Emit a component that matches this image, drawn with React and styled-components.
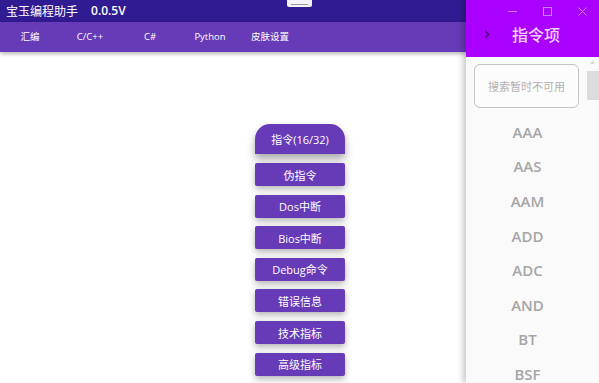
import React from "react";
import styled, { createGlobalStyle } from "styled-components";

const Global = createGlobalStyle`
  html, body { margin: 0; padding: 0; background: #ffffff; }
  body { width: 599px; height: 383px; overflow: hidden; font-family: "Open Sans", "Noto Sans CJK SC", sans-serif; }
  * { box-sizing: border-box; }
`;

const Window = styled.div`
  position: relative;
  width: 599px;
  height: 383px;
  overflow: hidden;
  display: flex;
  flex-direction: column;
  background: #ffffff;
`;

const TitleBar = styled.div`
  height: 22px;
  flex-shrink: 0;
  background: #311b92;
  display: grid;
  grid-template-columns: 1fr auto 1fr;
  align-items: start;
`;

const Title = styled.div`
  color: #ffffff;
  font-family: "Noto Sans CJK SC", sans-serif;
  font-size: 12px;
  line-height: 21px;
  padding-left: 6px;
  white-space: nowrap;
  display: flex;
  gap: 13px;
`;

const Version = styled.span`
  font-family: "Open Sans", sans-serif;
  font-weight: 600;
  font-size: 12px;
`;

const Toggle = styled.div`
  width: 25px;
  height: 7px;
  background: #f4f1f8;
  border-radius: 0 0 2px 2px;
  display: flex;
  align-items: center;
  justify-content: center;
  &::after {
    content: "";
    width: 17px;
    height: 1px;
    background: #9a9a9a;
    margin-top: 2px;
  }
`;

const MenuBar = styled.div`
  height: 30px;
  flex-shrink: 0;
  background: #673ab7;
  display: grid;
  grid-template-columns: repeat(5, 60px);
  align-items: center;
  box-shadow: 0 2px 4px rgba(0, 0, 0, 0.28);
  position: relative;
  z-index: 1;
`;

const MenuItem = styled.div`
  color: #ffffff;
  font-family: "Open Sans", "Noto Sans CJK SC", sans-serif;
  font-size: 9.5px;
  text-align: center;
  line-height: 30px;
`;

const Content = styled.div`
  flex: 1;
  min-height: 0;
  display: flex;
  flex-direction: column;
  align-items: center;
  padding-top: 72px;
  gap: 8.6px;
`;

const DialHead = styled.div`
  width: 90px;
  height: 30px;
  flex-shrink: 0;
  margin-left: 1px;
  background: #673ab7;
  border-radius: 15px 15px 0 0;
  color: #ffffff;
  font-family: "Open Sans", "Noto Sans CJK SC", sans-serif;
  font-size: 11px;
  display: flex;
  align-items: center;
  justify-content: center;
  box-shadow: 0 5px 8px rgba(0, 0, 0, 0.35);
  margin-bottom: 0.5px;
`;

const DialItem = styled.div`
  width: 90px;
  height: 23px;
  flex-shrink: 0;
  margin-left: 1px;
  background: #673ab7;
  border-radius: 2px;
  color: #ffffff;
  font-family: "Open Sans", "Noto Sans CJK SC", sans-serif;
  font-size: 11px;
  display: flex;
  align-items: center;
  justify-content: center;
  box-shadow: 0 3px 7px rgba(0, 0, 0, 0.3);
`;

const Drawer = styled.div`
  position: absolute;
  top: 0;
  right: 0;
  width: 133px;
  height: 383px;
  display: flex;
  flex-direction: column;
  background: #fafafa;
  box-shadow: -3px 0 6px rgba(0, 0, 0, 0.22);
  z-index: 2;
`;

const DrawerHead = styled.div`
  height: 57px;
  flex-shrink: 0;
  background: #aa00ff;
  display: flex;
  flex-direction: column;
`;

const Controls = styled.div`
  height: 22px;
  display: flex;
  justify-content: flex-end;
  margin-right: -1px;
`;

const Control = styled.div`
  width: 35px;
  display: flex;
  align-items: center;
  justify-content: center;
  svg { display: block; }
`;

const HeadRow = styled.div`
  height: 24px;
  display: flex;
  align-items: center;
  padding-left: 18px;
  gap: 22px;
`;

const HeadTitle = styled.div`
  color: #f6d3ff;
  font-family: "Noto Sans CJK SC", sans-serif;
  font-size: 16px;
  font-weight: 500;
`;

const DrawerBody = styled.div`
  flex: 1;
  display: flex;
  min-height: 0;
  overflow: hidden;
`;

const ListColumn = styled.div`
  flex: 1;
  display: flex;
  flex-direction: column;
  padding: 7px 7px 0 8px;
  overflow: hidden;
`;

const Search = styled.div`
  height: 44px;
  flex-shrink: 0;
  border: 1px solid #c4c4c4;
  border-radius: 6px;
  display: flex;
  align-items: center;
  justify-content: center;
  color: #b2b2b2;
  font-family: "Noto Sans CJK SC", sans-serif;
  font-size: 11px;
  background: #fcfcfc;
`;

const List = styled.div`
  margin-top: 6.5px;
  display: flex;
  flex-direction: column;
`;

const ListItem = styled.div`
  height: 34.6px;
  flex-shrink: 0;
  display: flex;
  align-items: center;
  justify-content: center;
  color: #a6a6a6;
  font-family: "Open Sans", sans-serif;
  font-weight: 600;
  font-size: 15px;
  margin-left: 2px;
`;

const ScrollTrack = styled.div`
  width: 13px;
  flex-shrink: 0;
  display: flex;
  flex-direction: column;
  align-items: flex-end;
  padding-top: 3px;
`;

const ScrollArrow = styled.div`
  width: 13px;
  height: 8px;
  display: flex;
  justify-content: center;
`;

const ScrollThumb = styled.div`
  width: 12px;
  height: 29px;
  margin-top: 3px;
  background: #dcdcdc;
`;

const menu = ["汇编", "C/C++", "C#", "Python", "皮肤设置"];
const dial = ["伪指令", "Dos中断", "Bios中断", "Debug命令", "错误信息", "技术指标", "高级指标"];
const items = ["AAA", "AAS", "AAM", "ADD", "ADC", "AND", "BT", "BSF"];

export default function App() {
  return (
    <>
      <Global />
      <Window>
        <TitleBar>
          <Title>
            <span>宝玉编程助手</span>
            <Version>0.0.5V</Version>
          </Title>
          <Toggle />
          <div />
        </TitleBar>
        <MenuBar>
          {menu.map((m) => (
            <MenuItem key={m}>{m}</MenuItem>
          ))}
        </MenuBar>
        <Content>
          <DialHead>指令(16/32)</DialHead>
          {dial.map((d) => (
            <DialItem key={d}>{d}</DialItem>
          ))}
        </Content>
        <Drawer>
          <DrawerHead>
            <Controls>
              <Control>
                <svg width="9" height="9" viewBox="0 0 9 9">
                  <line x1="0" y1="4.5" x2="9" y2="4.5" stroke="#c77cff" strokeWidth="1" />
                </svg>
              </Control>
              <Control>
                <svg width="9" height="9" viewBox="0 0 9 9">
                  <rect x="0.5" y="0.5" width="8" height="8" fill="none" stroke="#c77cff" strokeWidth="1" />
                </svg>
              </Control>
              <Control>
                <svg width="9" height="9" viewBox="0 0 9 9">
                  <path d="M0.5 0.5 L8.5 8.5 M8.5 0.5 L0.5 8.5" stroke="#c77cff" strokeWidth="1" />
                </svg>
              </Control>
            </Controls>
            <HeadRow>
              <svg width="6" height="9" viewBox="0 0 6 9">
                <path d="M1 1 L4.5 4.5 L1 8" fill="none" stroke="#5b0a8f" strokeWidth="1.8" />
              </svg>
              <HeadTitle>指令项</HeadTitle>
            </HeadRow>
          </DrawerHead>
          <DrawerBody>
            <ListColumn>
              <Search>搜索暂时不可用</Search>
              <List>
                {items.map((i) => (
                  <ListItem key={i}>{i}</ListItem>
                ))}
              </List>
            </ListColumn>
            <ScrollTrack>
              <ScrollArrow>
                <svg width="5" height="4" viewBox="0 0 5 4">
                  <path d="M0 4 L2.5 0.5 L5 4 Z" fill="#d8d8d8" />
                </svg>
              </ScrollArrow>
              <ScrollThumb />
            </ScrollTrack>
          </DrawerBody>
        </Drawer>
      </Window>
    </>
  );
}
